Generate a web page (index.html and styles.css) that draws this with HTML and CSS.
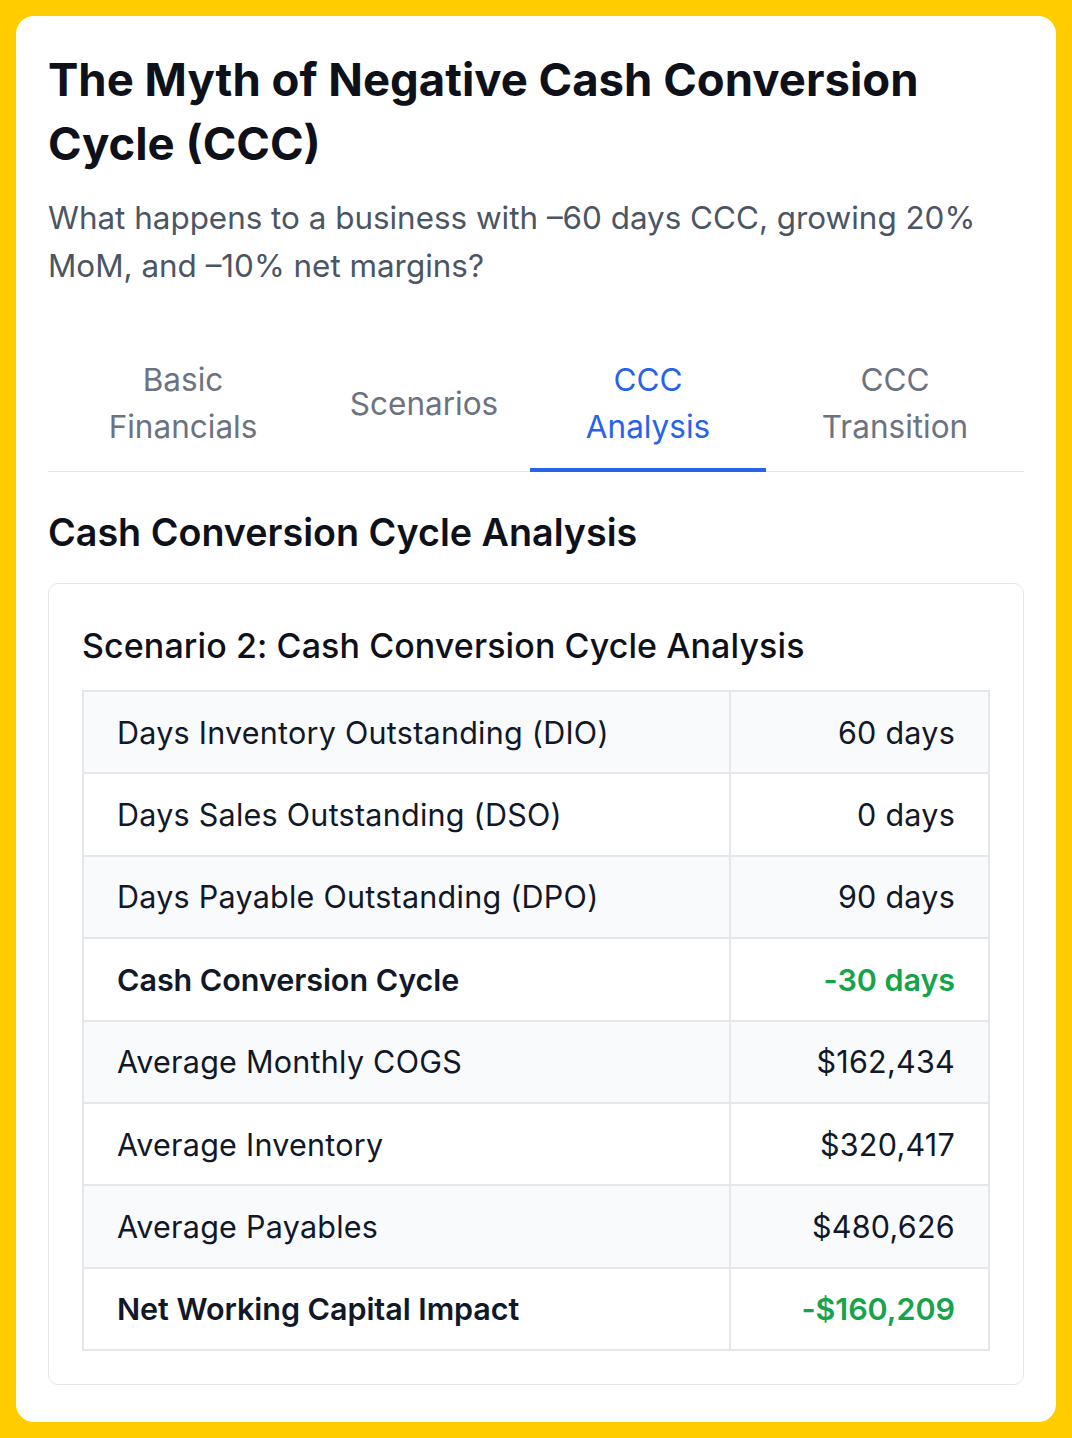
FILE: index.html
```html
<!DOCTYPE html>
<html>
<head>
<meta charset="utf-8">
<link rel="stylesheet" href="styles.css">
</head>
<body>
<div class="card">
  <h1 class="title">The Myth of Negative Cash Conversion Cycle (CCC)</h1>
  <p class="subtitle">What happens to a business with –60 days CCC, growing 20% MoM, and –10% net margins?</p>
  <div class="tabs">
    <div class="tab">Basic<br>Financials</div>
    <div class="tab">Scenarios</div>
    <div class="tab active">CCC<br>Analysis</div>
    <div class="tab">CCC<br>Transition</div>
  </div>
  <h2 class="section-title">Cash Conversion Cycle Analysis</h2>
  <div class="panel">
    <h3 class="panel-title">Scenario 2: Cash Conversion Cycle Analysis</h3>
    <table class="metrics">
      <tr><td>Days Inventory Outstanding (DIO)</td><td class="val">60 days</td></tr>
      <tr><td>Days Sales Outstanding (DSO)</td><td class="val">0 days</td></tr>
      <tr><td>Days Payable Outstanding (DPO)</td><td class="val">90 days</td></tr>
      <tr class="strong"><td>Cash Conversion Cycle</td><td class="val good">-30 days</td></tr>
      <tr><td>Average Monthly COGS</td><td class="val">$162,434</td></tr>
      <tr><td>Average Inventory</td><td class="val">$320,417</td></tr>
      <tr><td>Average Payables</td><td class="val">$480,626</td></tr>
      <tr class="strong"><td>Net Working Capital Impact</td><td class="val good">-$160,209</td></tr>
    </table>
  </div>
</div>
</body>
</html>
```
FILE: styles.css
```css
* { box-sizing: border-box; }
html, body { margin: 0; padding: 0; }
body {
  background: #ffcc00;
  padding: 16px;
  font-family: Inter, "Noto Sans", sans-serif;
  color: #111827;
}
.card {
  background: #fff;
  border-radius: 18px;
  height: 1406px;
  padding: 32px 32px 37px;
}
.title {
  margin: 0;
  font-size: 45.5px;
  line-height: 64px;
  font-weight: 700;
  letter-spacing: 0;
  color: #0f111a;
}
.subtitle {
  margin: 18px 0 0;
  font-size: 31.4px;
  line-height: 48px;
  letter-spacing: 0;
  color: #4b5563;
}
.tabs {
  margin-top: 63px;
  display: grid;
  grid-template-columns: 270px 212px 236px 258px;
  border-bottom: 1px solid #e5e7eb;
}
.tab {
  display: flex;
  align-items: center;
  justify-content: center;
  text-align: center;
  font-size: 31.5px;
  line-height: 47px;
  color: #6b7280;
  padding: 3px 0 18px;
  border-bottom: 4px solid transparent;
  margin-bottom: -1px;
}
.tab.active {
  color: #2563eb;
  border-bottom-color: #2563eb;
}
.section-title {
  margin: 34px 0 0;
  font-size: 37.7px;
  line-height: 52px;
  font-weight: 600;
  color: #0f111a;
}
.panel {
  margin-top: 25px;
  border: 1px solid #e5e7eb;
  border-radius: 10px;
  padding: 38px 33px 33px;
}
.panel-title {
  margin: 0;
  font-size: 34px;
  line-height: 48px;
  font-weight: 500;
  letter-spacing: 0.1px;
  color: #0f111a;
}
.metrics {
  margin-top: 20px;
  width: 100%;
  border-collapse: collapse;
}
.metrics td {
  border: 2px solid #e5e7eb;
  height: 82.4px;
  padding: 0 33px;
  font-size: 30.5px;
  letter-spacing: 0.25px;
  color: #111827;
}
.metrics td:first-child { width: 647px; }
.metrics tr:nth-child(odd) td { background: #f9fafb; }
.metrics .val { text-align: right; }
.metrics .strong td { font-weight: 600; letter-spacing: -0.05px; }
.metrics .good { color: #16a34a; }
```
